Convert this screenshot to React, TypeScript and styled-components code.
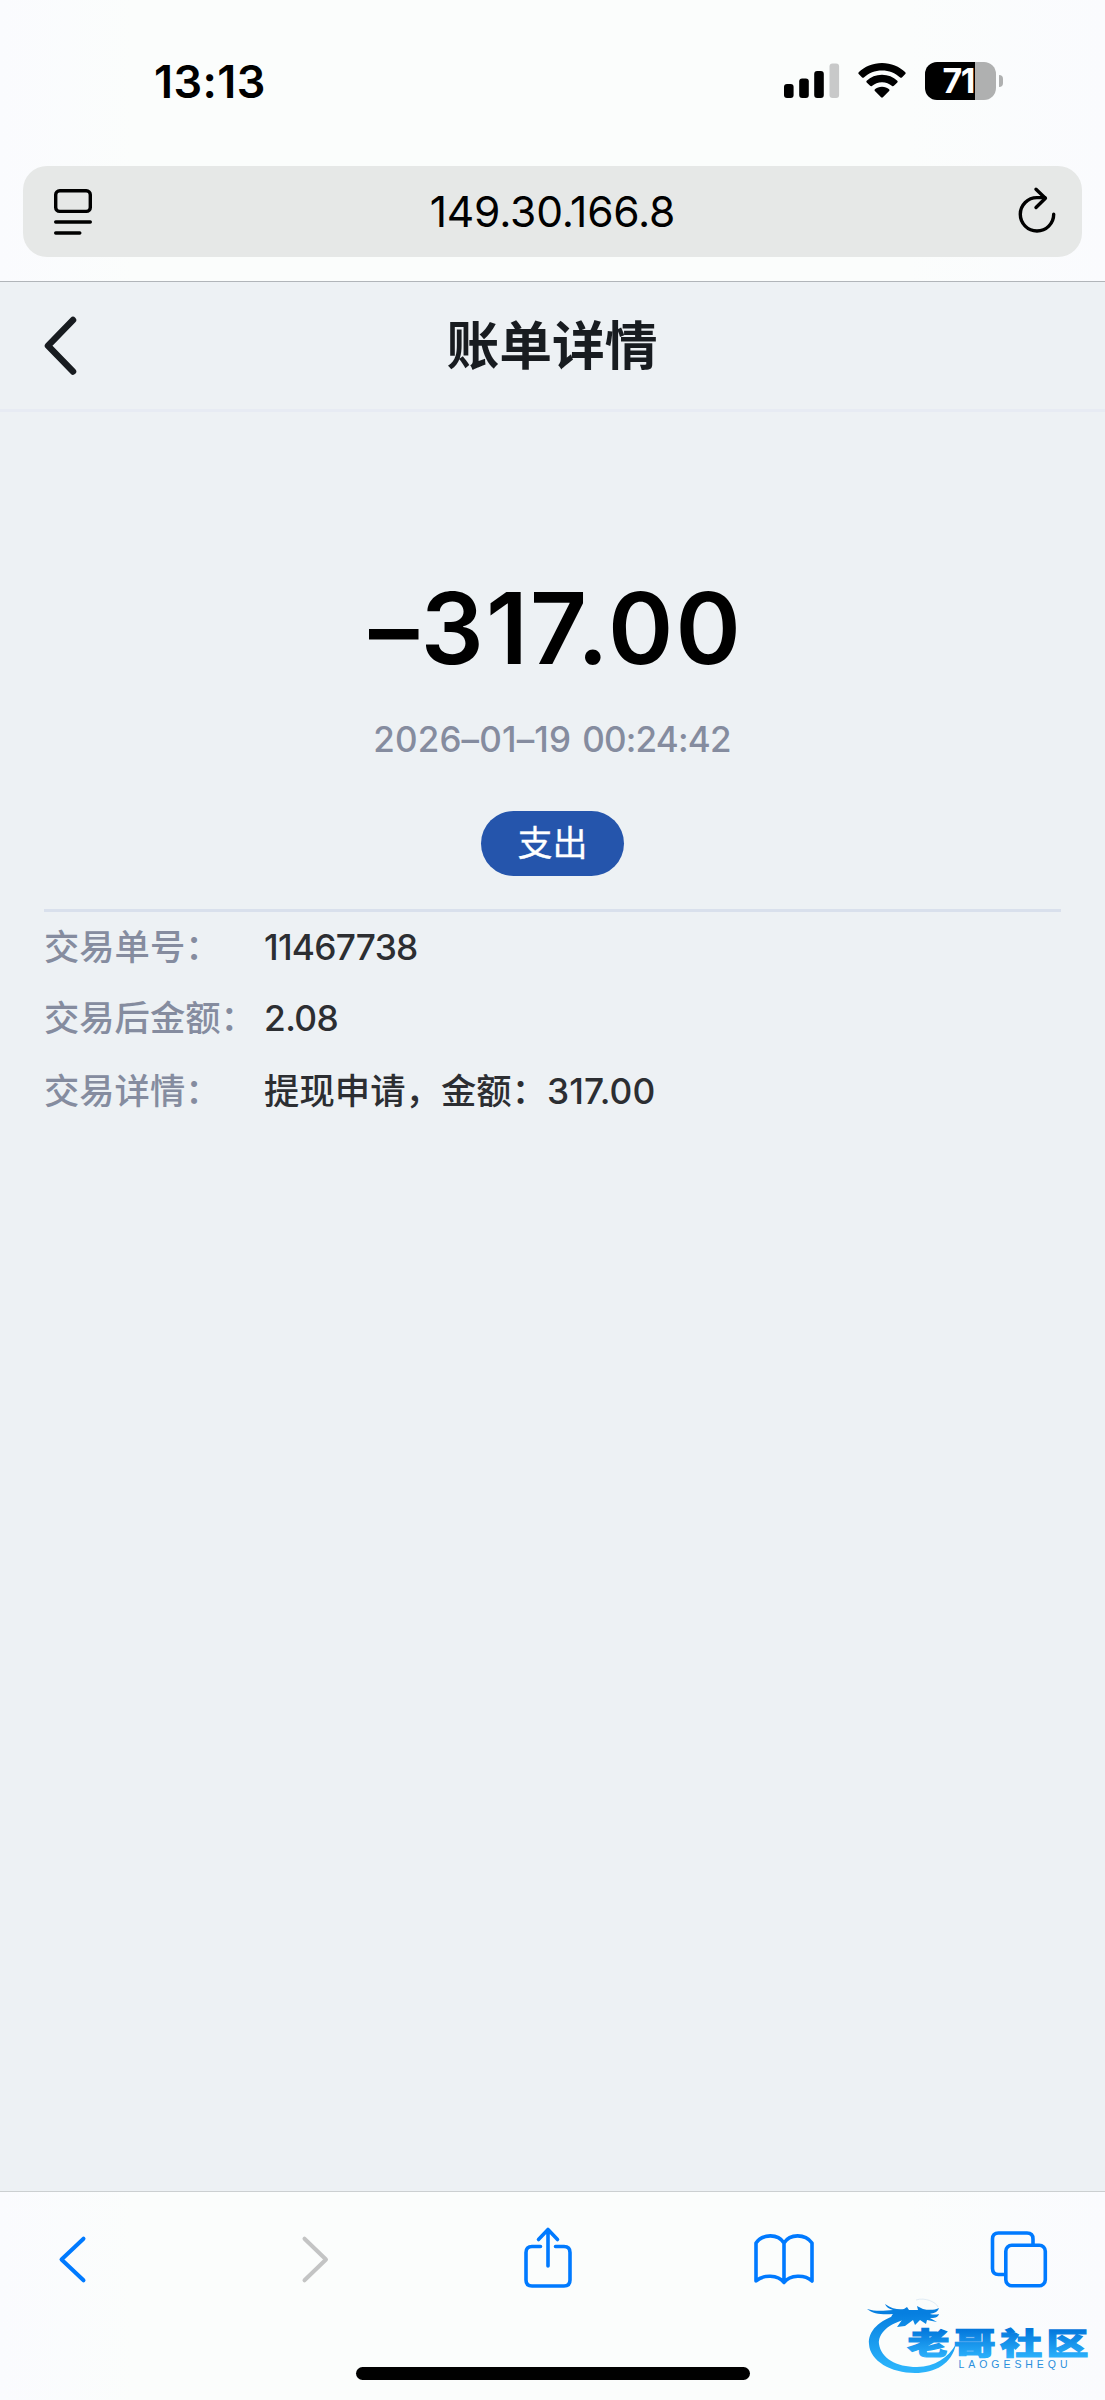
import React from 'react'
import styled, { createGlobalStyle } from 'styled-components'

const color = {
  chrome: '#fbfdfc',
  chromeEdge: '#fafbfe',
  field: '#e6e8e7',
  page: '#edf1f4',
  title: '#181c20',
  muted: '#858c9f',
  text: '#2c2e32',
  accent: '#2555ac',
  ios: '#007aff',
  disabled: '#c3c4c4',
}

const GlobalStyle = createGlobalStyle`
  * { box-sizing: border-box; }
  body {
    margin: 0;
    font-family: Inter, "Noto Sans CJK SC", sans-serif;
    background: ${color.page};
  }
  svg { display: block; flex: none; overflow: visible; }
`

const Screen = styled.div`
  width: 1105px;
  height: 2400px;
  display: flex;
  flex-direction: column;
  overflow: hidden;
`

const BrowserTop = styled.div`
  height: 282px;
  padding: 0 23px;
  border-bottom: 1px solid #b1b5b9;
  background: linear-gradient(90deg, ${color.chromeEdge}, ${color.chrome} 12%, ${color.chrome} 82%, ${color.chromeEdge});
`

const StatusBar = styled.div`
  height: 166px;
  padding: 52px 79px 0 131px;
  display: flex;
  justify-content: space-between;
`

const Clock = styled.div`
  height: 60px;
  line-height: 60px;
  font-size: 45px;
  font-weight: 600;
  letter-spacing: 0.4px;
`

const StatusIcons = styled.div`
  height: 60px;
  display: flex;
  align-items: flex-start;
  padding-top: 10px;
`

const Battery = styled.div`
  margin-left: 19px;
  width: 71px;
  height: 38px;
  border-radius: 12px;
  line-height: 38px;
  padding-left: 17.5px;
  color: #fff;
  font-size: 34px;
  font-weight: 700;
  letter-spacing: -1.5px;
  background: linear-gradient(90deg, #000 50px, #afb0b0 50px);
`

const BatteryTip = styled.div`
  width: 4px;
  height: 12px;
  margin: 13px 0 0 3px;
  border-radius: 0 4px 4px 0;
  background: #afb0b0;
`

const AddressBar = styled.div`
  height: 91px;
  padding: 0 25px 0 30px;
  border-radius: 24px;
  display: grid;
  grid-template-columns: 40px 1fr 40px;
  align-items: center;
  background: ${color.field};
`

const Address = styled.span`
  padding-right: 5px;
  text-align: center;
  font-size: 42.5px;
  letter-spacing: -0.2px;
`

const NavBar = styled.div`
  height: 130px;
  padding: 0 41px 0 40px;
  display: grid;
  grid-template-columns: 40px 1fr 40px;
  align-items: center;
  border-bottom: 3px solid #e7ebf3;
`

const Title = styled.h1`
  margin: 0;
  text-align: center;
  font-size: 52.8px;
  font-weight: 700;
  line-height: 80px;
  color: ${color.title};
`

const Content = styled.main`
  flex: 1;
  padding: 156px 44px 0;
`

const Summary = styled.section`
  display: flex;
  flex-direction: column;
  align-items: center;
  padding-bottom: 33px;
  border-bottom: 3px solid #d9e0ec;
`

const Amount = styled.div`
  padding-left: 7px;
  font-size: 99px;
  line-height: 120px;
  font-weight: 600;
  letter-spacing: 2.2px;
  color: #000;
`

const Time = styled.div`
  margin-top: 31px;
  padding-right: 1px;
  display: flex;
  gap: 11px;
  font-size: 35px;
  line-height: 40px;
  font-weight: 500;
  color: ${color.muted};
`

const TimePart = styled.span<{ $tracking: number }>`
  letter-spacing: ${({ $tracking }) => $tracking}px;
`

const Tag = styled.div`
  margin-top: 52px;
  width: 143px;
  height: 65px;
  border-radius: 33px;
  line-height: 65px;
  text-align: center;
  font-size: 35px;
  color: #fff;
  -webkit-text-stroke: 0.3px #fff;
  background: ${color.accent};
`

const Details = styled.section`
  padding-top: 1px;
`

const Row = styled.div<{ $height?: number }>`
  height: ${({ $height = 70 }) => $height}px;
  display: grid;
  grid-template-columns: 220px 1fr;
  align-items: center;
  font-size: 35.3px;
  line-height: 50px;
`

const Label = styled.span`
  color: ${color.muted};
  font-weight: 500;
  white-space: nowrap;
`

const Value = styled.span<{ $tracking: number }>`
  color: ${color.text};
  font-weight: 500;
  letter-spacing: ${({ $tracking }) => $tracking}px;
`

const BrowserBottom = styled.div`
  position: relative;
  height: 209px;
  border-top: 1px solid #cbcfd1;
  display: flex;
  flex-direction: column;
  align-items: center;
  background: linear-gradient(90deg, ${color.chromeEdge}, ${color.chrome} 12%, ${color.chrome} 82%, ${color.chromeEdge});
`

const Toolbar = styled.div`
  width: 100%;
  height: 136px;
  padding: 0 56px 0 42px;
  display: flex;
  align-items: center;
  justify-content: space-between;
`

const ToolButton = styled.div<{ $shift?: number }>`
  width: 60px;
  display: flex;
  justify-content: center;
  padding-left: ${({ $shift = 0 }) => $shift}px;
`

const HomeIndicator = styled.div`
  margin-top: 39px;
  width: 394px;
  height: 13px;
  border-radius: 7px;
  background: #000;
`

const Watermark = styled.div`
  position: absolute;
  right: 10px;
  bottom: 22px;
`

const Stroke = ({ w, h, c = color.ios, s = 4, children }: { w: number; h: number; c?: string; s?: number; children: React.ReactNode }) => (
  <svg width={w} height={h} viewBox={`0 0 ${w} ${h}`} fill="none" stroke={c} strokeWidth={s} strokeLinecap="round" strokeLinejoin="round">
    {children}
  </svg>
)

const Signal = () => (
  <svg width="56" height="38" viewBox="0 0 56 38">
    <rect x="0" y="22" width="9.6" height="14" rx="3" />
    <rect x="15.2" y="16.5" width="9.6" height="19.5" rx="3" />
    <rect x="30.2" y="9" width="9.6" height="27" rx="3" />
    <rect x="45.5" y="1.5" width="9.6" height="34.5" rx="3" fill="#c8c9c9" />
  </svg>
)

const WifiSvg = styled.svg`
  margin-left: 18px;
`

const Wifi = () => (
  <WifiSvg width="48" height="38" viewBox="0 0 48 38">
    <path d="M24 1C33 1 41.5 4.5 47.3 10.3Q48.2 11.2 47.3 12.1L43.9 15.4Q43 16.2 42.1 15.4C37.3 11.2 31 8.5 24 8.5S10.7 11.2 5.9 15.4Q5 16.2 4.1 15.4L.7 12.1Q-.2 11.2.7 10.3C6.5 4.5 15 1 24 1Z" />
    <path d="M24 12.8C30 12.8 35.3 15 39.3 18.7Q40.2 19.6 39.3 20.5L35.9 23.8Q35 24.6 34.1 23.9C31.3 21.6 27.9 20.2 24 20.2S16.7 21.6 13.9 23.9Q13 24.6 12.1 23.8L8.7 20.5Q7.8 19.6 8.7 18.7C12.7 15 18 12.8 24 12.8Z" />
    <path d="M24 24.7C26.8 24.7 29.3 25.6 31.1 27.2Q32 28.1 31.1 29L24.9 35.3Q24 36.2 23.1 35.3L16.9 29Q16 28.1 16.9 27.2C18.7 25.6 21.2 24.7 24 24.7Z" />
  </WifiSvg>
)

const ReaderIcon = () => (
  <Stroke w={40} h={48} c="#000" s={3.4}>
    <rect x="2.7" y="2.8" width="34.6" height="20.6" rx="4" />
    <path d="M2.7 34H37.3M2.7 45H26.8" />
  </Stroke>
)

const ReloadIcon = () => (
  <Stroke w={40} h={50} c="#000" s={3.4}>
    <path d="M36.7 27.3A16.7 16.7 0 1 1 20 10.6H28" />
    <path d="M19 2.2L28.4 11.2L19 20.5" />
  </Stroke>
)

const Logo = () => (
  <svg width="230" height="80" viewBox="0 0 230 80">
    <defs>
      <linearGradient id="ring" x1="0" y1="5" x2="0" y2="76" gradientUnits="userSpaceOnUse">
        <stop offset=".15" stopColor="#067fe0" />
        <stop offset=".9" stopColor="#2bb3fb" />
      </linearGradient>
      <linearGradient id="word" x1="0" y1="-26" x2="0" y2="3" gradientUnits="userSpaceOnUse">
        <stop offset="0" stopColor="#0478dc" />
        <stop offset="1" stopColor="#2aaffa" />
      </linearGradient>
    </defs>
    <g fill="url(#ring)">
      <path d="M34 16C14 22 3 33 4 46C5 63 26 75 50 75C70 75 87 66 91 46C83 60 70 68.5 52 69C31 69 16 60 14 46C13 36 23 25 43 21Z" />
      <path d="M2 11C10 13.5 18 13 28 12C24 11 21 9 20 6C27 11 34 12 39 11L42 9L44 12L53 12L52 8L58 11C64 12.5 70 12 74 10C73 14 69 15 65 16C69 17 72 16.5 74 16C73 20 69 20 65 20L72 24L62 22L61 26L55 22L50 27L48 22L40 28L32 29L37 22L29 23C25 22 26 18 28 16C18 17 8 16 2 11Z" />
    </g>
    <path d="M51 2C60 -1 71 4 73 9" fill="none" stroke="#e0ecf5" strokeWidth="1" />
    <g transform="translate(42.5 56) scale(1.31 .93)">
      <text fontFamily='"Noto Sans CJK SC", sans-serif' fontWeight="900" fontSize="32" letterSpacing="3.4" fill="url(#word)" stroke="url(#word)" strokeWidth="1.2">老哥社区</text>
    </g>
    <text x="93.5" y="69.5" fontFamily='"Liberation Sans", sans-serif' fontSize="10.5" textLength="109" fill="#2a8fdc">LAOGESHEQU</text>
  </svg>
)

const details = [
  { label: '交易单号：', value: '11467738', height: 70, tracking: -0.75 },
  { label: '交易后金额：', value: '2.08', height: 71, tracking: -0.6 },
  { label: '交易详情：', value: '提现申请，金额：317.00', height: 76, tracking: 0.08 },
]

const App: React.FC = () => {
  return (
    <>
      <GlobalStyle />
      <Screen>
        <BrowserTop>
          <StatusBar>
            <Clock>13:13</Clock>
            <StatusIcons>
              <Signal />
              <Wifi />
              <Battery>71</Battery>
              <BatteryTip />
            </StatusIcons>
          </StatusBar>
          <AddressBar>
            <ReaderIcon />
            <Address>149.30.166.8</Address>
            <ReloadIcon />
          </AddressBar>
        </BrowserTop>

        <NavBar>
          <Stroke w={40} h={64} c={color.title} s={6.5}>
            <path d="M33 6L8 31.8L33 57.5" />
          </Stroke>
          <Title>账单详情</Title>
        </NavBar>

        <Content>
          <Summary>
            <Amount>–317.00</Amount>
            <Time>
              <TimePart $tracking={0.15}>2026–01–19</TimePart>
              <TimePart $tracking={-0.8}>00:24:42</TimePart>
            </Time>
            <Tag>支出</Tag>
          </Summary>
          <Details>
            {details.map(({ label, value, height, tracking }) => (
              <Row key={label} $height={height}>
                <Label>{label}</Label>
                <Value $tracking={tracking}>{value}</Value>
              </Row>
            ))}
          </Details>
        </Content>

        <BrowserBottom>
          <Toolbar>
            <ToolButton>
              <Stroke w={30} h={50}>
                <path d="M26.5 3.7L4.5 24.5L26.5 45.3" />
              </Stroke>
            </ToolButton>
            <ToolButton $shift={12}>
              <Stroke w={30} h={50} c={color.disabled}>
                <path d="M4.5 3.7L26 24.5L4.5 45.3" />
              </Stroke>
            </ToolButton>
            <ToolButton $shift={4}>
              <Stroke w={50} h={64} s={3.6}>
                <path d="M17.5 18.5H9Q3 18.5 3 24.5V52Q3 58 9 58H41Q47 58 47 52V24.5Q47 18.5 41 18.5H32.5" />
                <path d="M25 38V2M15.5 11.5L25 1.5L34.5 11.5" />
              </Stroke>
            </ToolButton>
            <ToolButton $shift={4}>
              <Stroke w={62} h={54} s={3.6}>
                <path d="M31 10C25 .5 10 .5 3 10V48C10 41.5 25 41.5 31 49.5C37 41.5 52 41.5 59 48V10C52 .5 37 .5 31 10ZM31 10V49.5" />
              </Stroke>
            </ToolButton>
            <ToolButton>
              <Stroke w={60} h={60} s={3.6}>
                <path d="M15 44.5H9.5Q3.5 44.5 3.5 38.5V9Q3.5 3 9.5 3H38Q44 3 44 9V15" />
                <rect x="16.8" y="15.3" width="39.5" height="40.5" rx="6" />
              </Stroke>
            </ToolButton>
          </Toolbar>
          <HomeIndicator />
          <Watermark>
            <Logo />
          </Watermark>
        </BrowserBottom>
      </Screen>
    </>
  )
}

export default App
